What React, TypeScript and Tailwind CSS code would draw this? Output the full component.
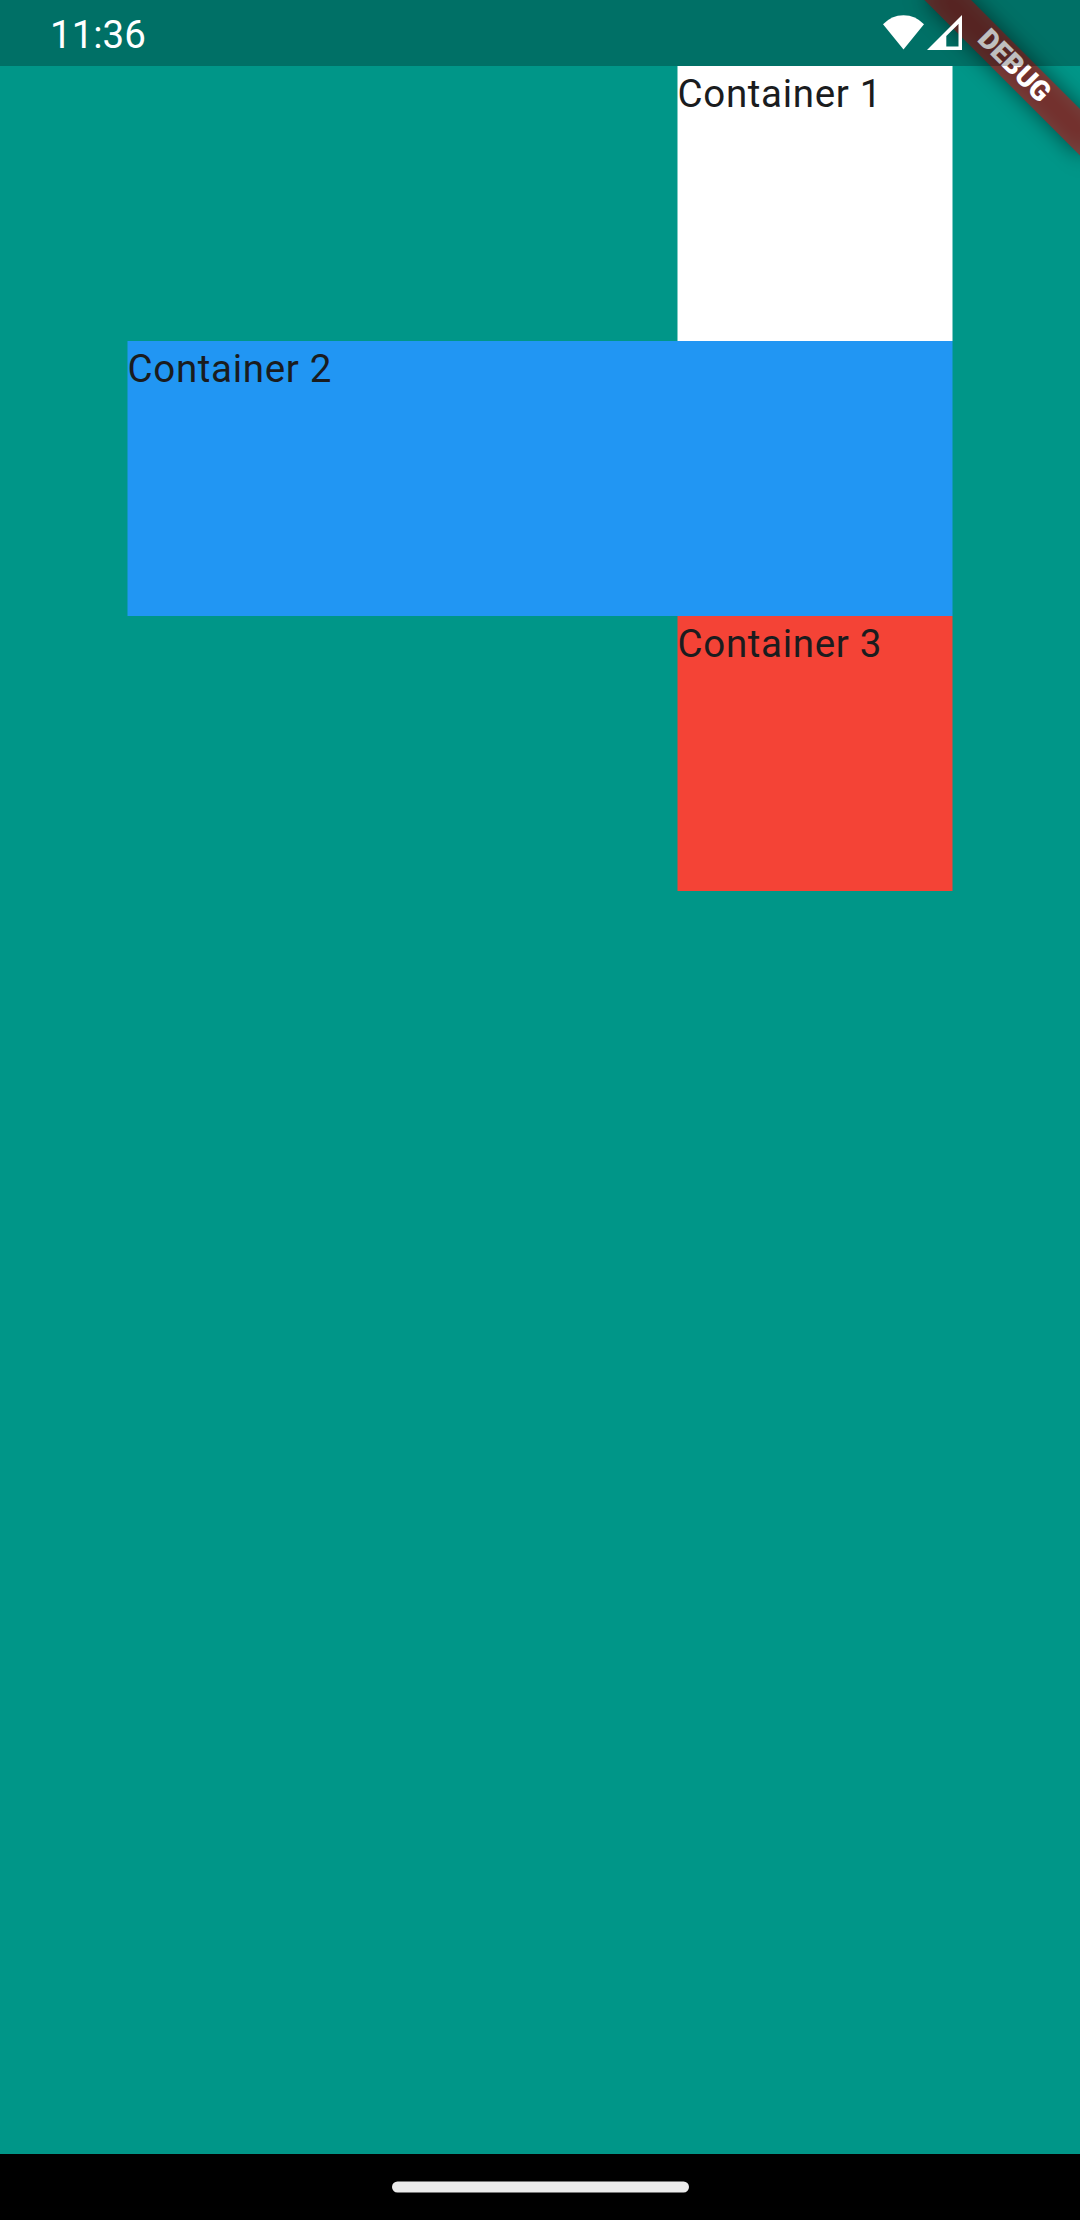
const boxes = [
  { label: 'Container 1', style: 'w-[275px] bg-white' },
  { label: 'Container 2', style: 'w-[825px] bg-[#2196f3]' },
  { label: 'Container 3', style: 'w-[275px] bg-[#f44336]' },
];

function DebugBanner() {
  return (
    <div className="absolute left-[970px] top-[77px] h-[33px] w-[220px] origin-[110px_-77px] rotate-45">
      <div className="absolute inset-0 bg-black/50 blur-[10.9px]" />
      <div className="absolute inset-0 flex items-center justify-center bg-[#b71c1c]/[0.627] text-[28.05px] font-black leading-none text-white">
        DEBUG
      </div>
    </div>
  );
}

function StatusBar() {
  return (
    <header className="absolute inset-x-0 top-0 flex h-[66px] items-center justify-between bg-black/25 pl-[50px] pr-[117px] text-white">
      <span className="pt-[3px] text-[38.5px] leading-[66px]">11:36</span>
      <svg width="80" height="36" viewBox="883 15 80 36" fill="currentColor">
        <path d="M903.5 49.5 L883 24.3 Q891.5 15.2 903.5 15.2 Q915.5 15.2 924 24.3 Z" />
        <path fillRule="evenodd" d="M927 50 L962 15 V50 Z M946.3 36 V46.5 H958.5 V24 Z" />
      </svg>
    </header>
  );
}

export default function App() {
  return (
    <div className="relative flex h-[2220px] w-[1080px] flex-col overflow-hidden bg-[#009688] font-['Roboto',sans-serif]">
      <main className="flex grow translate-x-[0.5px] flex-col items-end pr-[128px] pt-[66px]">
        {boxes.map((box) => (
          <div
            key={box.label}
            className={`h-[275px] text-[38.5px] leading-[55px] tracking-[0.6875px] text-[#1a1c1e] ${box.style}`}
          >
            {box.label}
          </div>
        ))}
      </main>
      <DebugBanner />
      <StatusBar />
      <footer className="flex h-[66px] justify-center bg-black pt-[27px]">
        <div className="h-[11px] w-[297px] translate-y-[0.5px] rounded-full bg-[#ebebeb]" />
      </footer>
    </div>
  );
}
